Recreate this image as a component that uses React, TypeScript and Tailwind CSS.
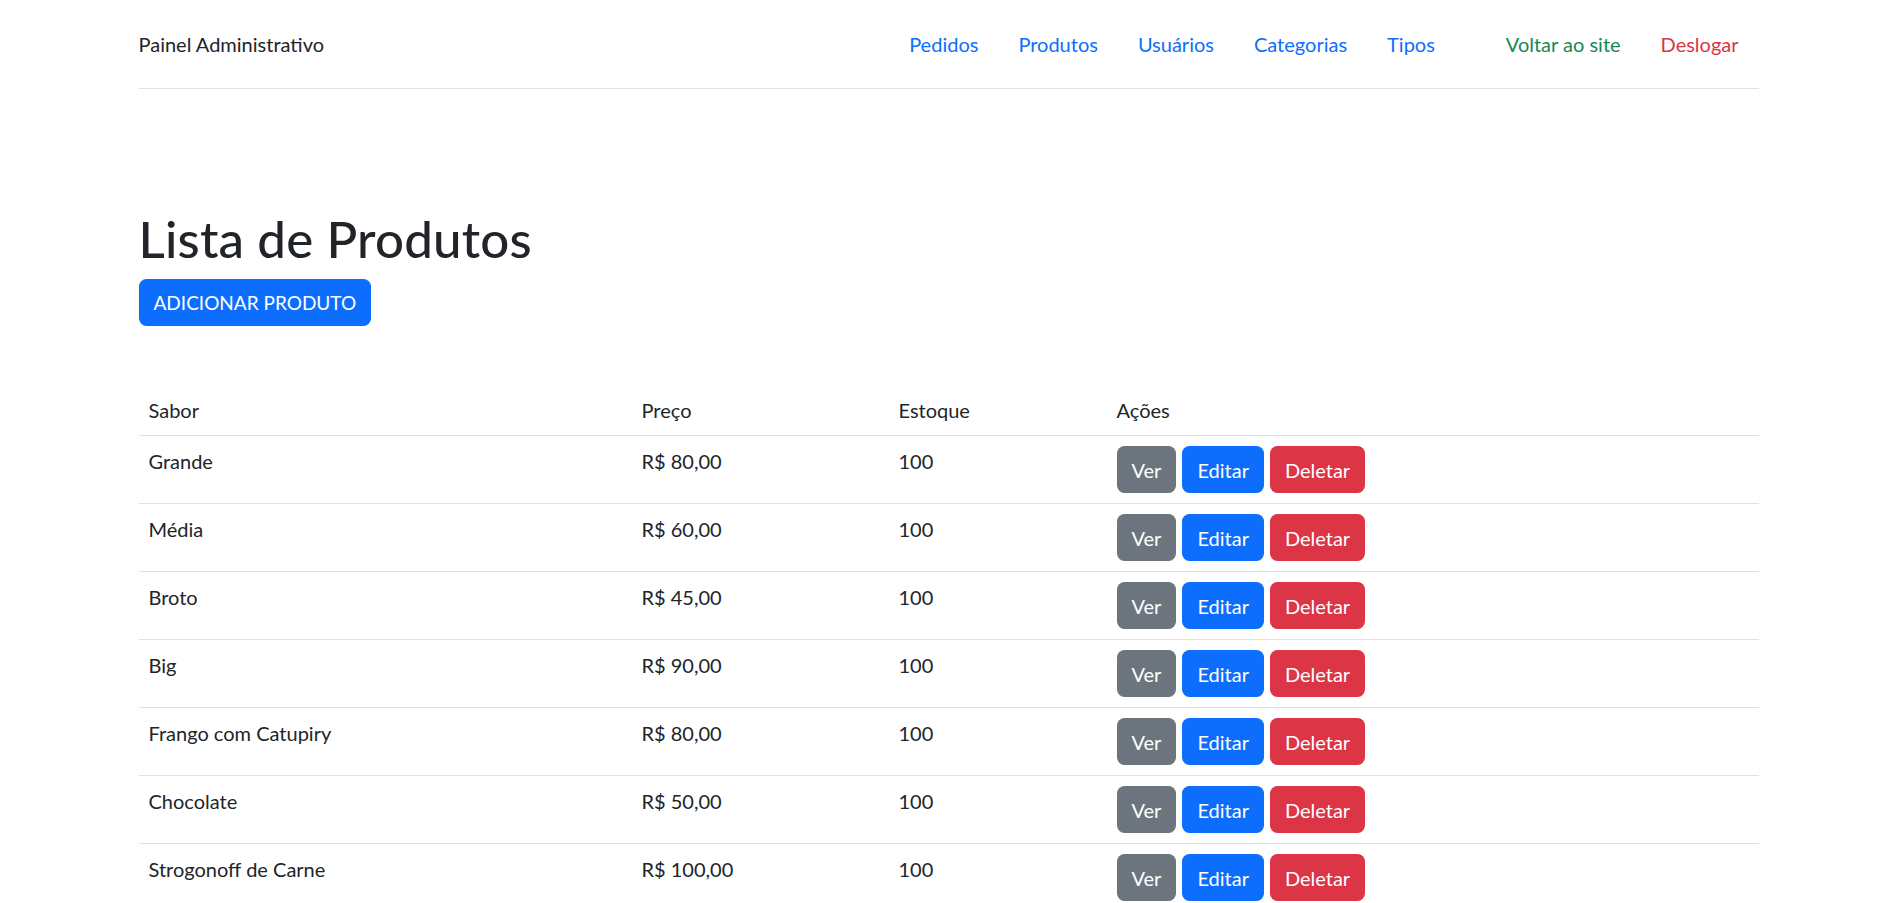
import React from "react";

const produtos = [
    { sabor: "Grande", preco: "R$ 80,00", estoque: 100 },
    { sabor: "Média", preco: "R$ 60,00", estoque: 100 },
    { sabor: "Broto", preco: "R$ 45,00", estoque: 100 },
    { sabor: "Big", preco: "R$ 90,00", estoque: 100 },
    { sabor: "Frango com Catupiry", preco: "R$ 80,00", estoque: 100 },
    { sabor: "Chocolate", preco: "R$ 50,00", estoque: 100 },
    { sabor: "Strogonoff de Carne", preco: "R$ 100,00", estoque: 100 },
];

const links = ["Pedidos", "Produtos", "Usuários", "Categorias", "Tipos"];

export default function App() {
    return (
        <div
            className="h-screen overflow-hidden bg-white text-[#212529] text-[20px] leading-[30px]"
            style={{ fontFamily: '"Segoe UI", Lato, "Noto Sans", sans-serif' }}
        >
            <div className="mx-auto w-[1620px]">
                {/* navbar */}
                <nav className="flex h-[89px] items-center justify-between border-b border-[#dee2e6]">
                    <span className="text-[20px]">Painel Administrativo</span>
                    <div className="flex items-center">
                        <ul className="flex">
                            {links.map((l) => (
                                <li key={l}>
                                    <a href="#" className="px-[20px] text-[#0d6efd]">
                                        {l}
                                    </a>
                                </li>
                            ))}
                        </ul>
                        <ul className="ml-[31px] flex">
                            <li>
                                <a href="#" className="px-[20px] text-[#198754]">
                                    Voltar ao site
                                </a>
                            </li>
                            <li>
                                <a href="#" className="px-[20px] text-[#dc3545]">
                                    Deslogar
                                </a>
                            </li>
                        </ul>
                    </div>
                </nav>

                <h1 className="mt-[120px] mb-[10px] text-[51px] leading-[60px] font-medium tracking-[0.2px]">Lista de Produtos</h1>
                <button className="h-[47px] rounded-[7.5px] bg-[#0d6efd] px-[15px] text-[19px] text-white">
                    ADICIONAR PRODUTO
                </button>

                <table className="mt-[59px] w-full table-fixed border-collapse text-left">
                    <thead>
                        <tr className="border-b border-[#dee2e6]">
                            <th className="w-[493px] p-[10px] font-normal">Sabor</th>
                            <th className="w-[257px] p-[10px] font-normal">Preço</th>
                            <th className="w-[218px] p-[10px] font-normal">Estoque</th>
                            <th className="p-[10px] font-normal">Ações</th>
                        </tr>
                    </thead>
                    <tbody>
                        {produtos.map((p) => (
                            <tr key={p.sabor} className="border-b border-[#dee2e6] align-top">
                                <td className="p-[10px]">{p.sabor}</td>
                                <td className="p-[10px]">{p.preco}</td>
                                <td className="p-[10px]">{p.estoque}</td>
                                <td className="p-[10px]">
                                    <div className="flex gap-[6px]">
                                        <button className="h-[47px] rounded-[7.5px] bg-[#6c757d] px-[15px] text-white">Ver</button>
                                        <button className="h-[47px] rounded-[7.5px] bg-[#0d6efd] px-[15px] text-white">Editar</button>
                                        <button className="h-[47px] rounded-[7.5px] bg-[#dc3545] px-[15px] text-white">Deletar</button>
                                    </div>
                                </td>
                            </tr>
                        ))}
                    </tbody>
                </table>
            </div>
        </div>
    );
}
